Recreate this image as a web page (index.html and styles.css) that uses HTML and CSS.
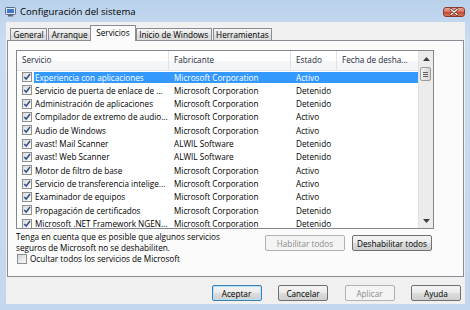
FILE: index.html
```html
<!DOCTYPE html>
<html lang="es">
  <head>
    <meta charset="utf-8" />
    <title>Configuración del sistema</title>
    <link rel="stylesheet" href="styles.css">
  </head>
  <body>
    <div class="window">
      <div class="titlebar">
        <svg class="app-icon" width="11" height="10" viewBox="0 0 11 10"><rect x="0.5" y="0.5" width="10" height="7" rx="1" fill="#dfe6ef" stroke="#5b6b84"/><rect x="2" y="2" width="7" height="4" fill="#3d78cc"/><rect x="3" y="8" width="5" height="1.5" fill="#5b6b84"/></svg>
        <span class="title">Configuración del sistema</span>
        <div class="close">
          <svg width="22" height="10" viewBox="0 0 22 10"><path d="M8 2.5l6 5M14 2.5l-6 5" stroke="#5a1f18" stroke-width="2.6" stroke-linecap="round"/><path d="M8 2.5l6 5M14 2.5l-6 5" stroke="#fff" stroke-width="1.4" stroke-linecap="round"/></svg>
        </div>
      </div>
      <div class="client">
        <div class="tabs">
          <div class="tab">General</div>
          <div class="tab">Arranque</div>
          <div class="tab active">Servicios</div>
          <div class="tab">Inicio de Windows</div>
          <div class="tab">Herramientas</div>
        </div>
        <div class="panel">
          <div class="list">
            <div class="columns">
              <div class="header">
                <div class="col">Servicio</div>
                <div class="col">Fabricante</div>
                <div class="col">Estado</div>
                <div class="col">Fecha de desha...</div>
              </div>
              <div class="row selected">
                <span class="check"><svg width="8" height="8" viewBox="0 0 8 8"><path d="M1.2 3.9l2 2.1 3.8-5" fill="none" stroke="#324f87" stroke-width="1.5"/></svg></span><span class="cell">Experiencia con aplicaciones</span><span class="cell">Microsoft Corporation</span><span class="cell">Activo</span><span class="cell"></span>
              </div>
              <div class="row">
                <span class="check"><svg width="8" height="8" viewBox="0 0 8 8"><path d="M1.2 3.9l2 2.1 3.8-5" fill="none" stroke="#324f87" stroke-width="1.5"/></svg></span><span class="cell">Servicio de puerta de enlace de ...</span><span class="cell">Microsoft Corporation</span><span class="cell">Detenido</span><span class="cell"></span>
              </div>
              <div class="row">
                <span class="check"><svg width="8" height="8" viewBox="0 0 8 8"><path d="M1.2 3.9l2 2.1 3.8-5" fill="none" stroke="#324f87" stroke-width="1.5"/></svg></span><span class="cell">Administración de aplicaciones</span><span class="cell">Microsoft Corporation</span><span class="cell">Detenido</span><span class="cell"></span>
              </div>
              <div class="row">
                <span class="check"><svg width="8" height="8" viewBox="0 0 8 8"><path d="M1.2 3.9l2 2.1 3.8-5" fill="none" stroke="#324f87" stroke-width="1.5"/></svg></span><span class="cell">Compilador de extremo de audio...</span><span class="cell">Microsoft Corporation</span><span class="cell">Activo</span><span class="cell"></span>
              </div>
              <div class="row">
                <span class="check"><svg width="8" height="8" viewBox="0 0 8 8"><path d="M1.2 3.9l2 2.1 3.8-5" fill="none" stroke="#324f87" stroke-width="1.5"/></svg></span><span class="cell">Audio de Windows</span><span class="cell">Microsoft Corporation</span><span class="cell">Activo</span><span class="cell"></span>
              </div>
              <div class="row">
                <span class="check"><svg width="8" height="8" viewBox="0 0 8 8"><path d="M1.2 3.9l2 2.1 3.8-5" fill="none" stroke="#324f87" stroke-width="1.5"/></svg></span><span class="cell">avast! Mail Scanner</span><span class="cell">ALWIL Software</span><span class="cell">Detenido</span><span class="cell"></span>
              </div>
              <div class="row">
                <span class="check"><svg width="8" height="8" viewBox="0 0 8 8"><path d="M1.2 3.9l2 2.1 3.8-5" fill="none" stroke="#324f87" stroke-width="1.5"/></svg></span><span class="cell">avast! Web Scanner</span><span class="cell">ALWIL Software</span><span class="cell">Detenido</span><span class="cell"></span>
              </div>
              <div class="row">
                <span class="check"><svg width="8" height="8" viewBox="0 0 8 8"><path d="M1.2 3.9l2 2.1 3.8-5" fill="none" stroke="#324f87" stroke-width="1.5"/></svg></span><span class="cell">Motor de filtro de base</span><span class="cell">Microsoft Corporation</span><span class="cell">Activo</span><span class="cell"></span>
              </div>
              <div class="row">
                <span class="check"><svg width="8" height="8" viewBox="0 0 8 8"><path d="M1.2 3.9l2 2.1 3.8-5" fill="none" stroke="#324f87" stroke-width="1.5"/></svg></span><span class="cell">Servicio de transferencia intelige...</span><span class="cell">Microsoft Corporation</span><span class="cell">Activo</span><span class="cell"></span>
              </div>
              <div class="row">
                <span class="check"><svg width="8" height="8" viewBox="0 0 8 8"><path d="M1.2 3.9l2 2.1 3.8-5" fill="none" stroke="#324f87" stroke-width="1.5"/></svg></span><span class="cell">Examinador de equipos</span><span class="cell">Microsoft Corporation</span><span class="cell">Activo</span><span class="cell"></span>
              </div>
              <div class="row">
                <span class="check"><svg width="8" height="8" viewBox="0 0 8 8"><path d="M1.2 3.9l2 2.1 3.8-5" fill="none" stroke="#324f87" stroke-width="1.5"/></svg></span><span class="cell">Propagación de certificados</span><span class="cell">Microsoft Corporation</span><span class="cell">Detenido</span><span class="cell"></span>
              </div>
              <div class="row">
                <span class="check"><svg width="8" height="8" viewBox="0 0 8 8"><path d="M1.2 3.9l2 2.1 3.8-5" fill="none" stroke="#324f87" stroke-width="1.5"/></svg></span><span class="cell">Microsoft .NET Framework NGEN...</span><span class="cell">Microsoft Corporation</span><span class="cell">Detenido</span><span class="cell"></span>
              </div>
            </div>
            <div class="scrollbar">
              <div class="arrow">
                <svg width="7" height="4" viewBox="0 0 7 4"><path d="M0 4L3.5 0 7 4z" fill="#3d3d3d"/></svg>
              </div>
              <div class="track">
                <div class="thumb"><span></span><span></span><span></span></div>
              </div>
              <div class="arrow">
                <svg width="7" height="4" viewBox="0 0 7 4"><path d="M0 0L3.5 4 7 0z" fill="#3d3d3d"/></svg>
              </div>
            </div>
          </div>
          <div class="below">
            <p class="note">Tenga en cuenta que es posible que algunos servicios<br>seguros de Microsoft no se deshabiliten.</p>
            <div class="actions">
              <button class="btn wide" disabled>Habilitar todos</button>
              <button class="btn wide">Deshabilitar todos</button>
            </div>
          </div>
          <div class="hide-ms">
            <span class="check empty"></span>
            <span>Ocultar todos los servicios de Microsoft</span>
          </div>
        </div>
        <div class="footer">
          <button class="btn default">Aceptar</button>
          <button class="btn">Cancelar</button>
          <button class="btn" disabled>Aplicar</button>
          <button class="btn">Ayuda</button>
        </div>
      </div>
    </div>
  </body>
</html>
```

FILE: styles.css
```css
* {
  box-sizing: border-box;
}

html, body {
  margin: 0;
  width: 470px;
  height: 310px;
  overflow: hidden;
}

body {
  font-family: "Open Sans", "Noto Sans", sans-serif;
  font-size: 8.2px;
  color: #000;
  background: linear-gradient(#b9d1eb, #cadcf0 40px, #c3d7ee);
}

.window {
  display: flex;
  flex-direction: column;
  height: 310px;
  padding: 0 5px 6px 6px;
}

/* title bar */

.titlebar {
  height: 22px;
  display: flex;
  align-items: center;
  margin-left: -1px;
}

.app-icon {
  margin-top: 1px;
}

.title {
  margin-left: 4px;
  font-size: 9.6px;
  color: #000;
}

.close {
  margin-left: auto;
  align-self: flex-start;
  margin-top: 7px;
  width: 22px;
  height: 10px;
  border: 1px solid #8a3b30;
  border-radius: 3px;
  background: linear-gradient(#e9a899, #d47461 45%, #c24a33 55%, #d8755a);
  display: flex;
}

.close svg {
  margin: -1px;
}

/* client area */

.client {
  flex: 1;
  display: flex;
  flex-direction: column;
  background: #f0f0f0;
  padding: 3px 1px 0 1px;
}

.tabs {
  display: flex;
  align-items: flex-end;
  height: 15px;
  padding-left: 3px;
}

.tab {
  height: 12px;
  padding: 0 2.5px;
  line-height: 11px;
  border: 1px solid #898c95;
  border-bottom: none;
  background: linear-gradient(#f4f4f4, #e6e6e6 50%, #d9d9d9 51%, #dedede);
  white-space: nowrap;
}

.tab + .tab {
  margin-left: 1px;
}

.tab.active {
  position: relative;
  z-index: 1;
  height: 16px;
  margin: 0 -2px -1px -1px;
  padding: 0 5px;
  line-height: 13px;
  background: #fbfbfb;
}

.tab.active + .tab {
  margin-left: 2px;
}

.panel {
  flex: 1;
  display: flex;
  flex-direction: column;
  border: 1px solid #898c95;
  background: #fbfbfb;
  padding: 9px 8px 0 8px;
}

/* list view */

.list {
  width: 418px;
  height: 179px;
  border: 1px solid #828790;
  background: #fff;
  display: flex;
  overflow: hidden;
}

.columns {
  width: 402px;
  overflow: hidden;
}

.header {
  height: 19.5px;
  display: grid;
  grid-template-columns: 152px 122px 46px 82px;
  background: linear-gradient(#fff, #fff 50%, #f4f6f8 51%, #f2f4f7);
  border-bottom: 1px solid #e3e8ef;
}

.header .col {
  padding: 0 5px;
  line-height: 18px;
  color: #1e2a3a;
  border-right: 1px solid #dfe3e8;
  white-space: nowrap;
}

.row {
  height: 13.333px;
  padding: 1px 0;
  display: grid;
  grid-template-columns: 17px 135px 122px 46px 82px;
}

.row .cell {
  line-height: 11.333px;
  padding-left: 5px;
  white-space: nowrap;
  overflow: hidden;
}

.row .cell:nth-child(2) {
  padding-left: 1px;
}

.row.selected .cell {
  background: #3399ff;
  color: #fff;
}

.check {
  width: 10px;
  height: 10px;
  margin: 0.5px 0 0 5px;
  border: 1px solid #8e8f8f;
  background: linear-gradient(135deg, #dcdcdc, #fdfdfd);
  display: flex;
}

.check svg {
  display: block;
}

.check.empty {
  background: linear-gradient(135deg, #d4d4d4, #fbfbfb);
}

/* scroll bar */

.scrollbar {
  width: 15px;
  display: flex;
  flex-direction: column;
  background: #ececec;
  border-left: 1px solid #e1e1e1;
}

.arrow {
  height: 15px;
  display: flex;
  align-items: center;
  justify-content: center;
}

.track {
  flex: 1;
  padding-top: 1px;
}

.thumb {
  width: 11px;
  height: 14px;
  margin-left: 1px;
  border: 1px solid #9b9b9b;
  border-radius: 2px;
  background: linear-gradient(90deg, #f4f4f4, #e4e4e4 50%, #d6d6d6);
  display: flex;
  flex-direction: column;
  justify-content: center;
  gap: 1px;
  padding: 0 2px;
}

.thumb span {
  height: 1px;
  background: #5f5f5f;
}

/* under the list */

.below {
  width: 418px;
  display: flex;
  margin-top: 2px;
}

.note {
  margin: 0;
  flex: 1;
  line-height: 11px;
}

.actions {
  display: flex;
  gap: 7px;
  margin: 4px 2px 0 0;
}

.hide-ms {
  display: flex;
  align-items: center;
  height: 11px;
  gap: 3px;
}

.hide-ms .check {
  margin: 0 0 0 1px;
}

/* buttons */

.btn {
  font: inherit;
  height: 16px;
  width: 50px;
  padding: 0;
  border: 1px solid #707070;
  border-radius: 2px;
  color: #000;
  background: linear-gradient(#f3f3f3, #ebebeb 50%, #dddddd 51%, #cfcfcf);
}

.btn.wide {
  width: 80px;
}

.btn:disabled {
  border-color: #adb2b5;
  background: #f4f4f4;
  color: #8a8a8a;
}

.btn.default {
  border-color: #3c7fb1;
  box-shadow: inset 0 0 0 1px #b3e3fa;
}

.footer {
  height: 27px;
  display: flex;
  justify-content: flex-end;
  align-items: flex-start;
  gap: 16.5px;
  padding: 8px 3px 0 0;
}
```
